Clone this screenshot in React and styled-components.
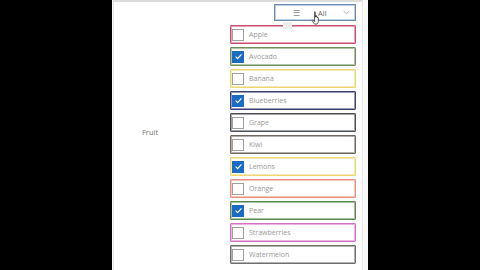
import React from "react";
import styled, { createGlobalStyle } from "styled-components";

const GlobalStyle = createGlobalStyle`
  html, body {
    margin: 0;
    padding: 0;
    background: #000;
    font-family: "Open Sans", "Liberation Sans", sans-serif;
  }
`;

const fruits = [
  { name: "Apple", color: "#c9506e", checked: false },
  { name: "Avocado", color: "#6f8f5c", checked: true },
  { name: "Banana", color: "#ecd774", checked: false },
  { name: "Blueberries", color: "#3d4272", checked: true },
  { name: "Grape", color: "#4f4f55", checked: false },
  { name: "Kiwi", color: "#6f6760", checked: false },
  { name: "Lemons", color: "#ecd774", checked: true },
  { name: "Orange", color: "#e8907e", checked: false },
  { name: "Pear", color: "#5b8a50", checked: true },
  { name: "Strawberries", color: "#d472c4", checked: false },
  { name: "Watermelon", color: "#6e6e6e", checked: false },
];

const Page = styled.div`
  width: 480px;
  height: 270px;
  display: flex;
  justify-content: center;
  overflow: hidden;
`;

const Panel = styled.div`
  width: 256px;
  height: 270px;
  background: #fafafa;
  padding: 0 5px 0 1px;
  box-sizing: border-box;
  display: flex;
`;

const Inner = styled.div`
  flex: 1;
  height: 270px;
  background: #fff;
  border-left: 1px solid #e6e6e6;
  border-right: 1px solid #e8e8e8;
  border-top: 2px solid #dcdcdc;
  box-sizing: border-box;
  display: flex;
  align-items: flex-start;
  padding: 2px 6px 0 28px;
`;

const Label = styled.div`
  width: 88px;
  margin-top: 123px;
  font-size: 7.5px;
  line-height: 10px;
  color: #777;
`;

const Column = styled.div`
  width: 126px;
  display: flex;
  flex-direction: column;
  align-items: flex-end;
`;

const FilterButton = styled.div`
  position: relative;
  width: 82px;
  height: 17px;
  box-sizing: border-box;
  border: 1px solid #6f8db0;
  box-shadow: inset 0 0 0 1px rgba(111, 141, 176, 0.45);
  display: flex;
  align-items: center;
  padding: 0 5px 0 18px;
  font-size: 7.5px;
  color: #666;
  margin-bottom: 4px;
`;

const Hamburger = styled.span`
  font-size: 8px;
  color: #888;
  width: 25px;
`;

const ButtonText = styled.span`
  flex: 1;
`;

const Cursor = styled.svg`
  position: absolute;
  left: 36px;
  top: 6px;
`;

const Ghost = styled.div`
  position: absolute;
  left: 8px;
  top: 17px;
  width: 9px;
  height: 7px;
  background: #ececec;
`;

const List = styled.div`
  width: 126px;
  display: flex;
  flex-direction: column;
  gap: 3px;
`;

const Item = styled.div`
  height: 19px;
  box-sizing: border-box;
  border: 1px solid ${(p) => p.$color};
  box-shadow: inset 0 0 0 1px ${(p) => p.$color}88;
  border-radius: 1px;
  display: flex;
  align-items: center;
  padding-left: 1px;
  font-size: 7px;
  color: #999;
`;

const Box = styled.span`
  width: 12px;
  height: 12px;
  box-sizing: border-box;
  border: 1px solid ${(p) => (p.$checked ? "#1b6ac4" : "#a0a0a0")};
  background: ${(p) => (p.$checked ? "#1b6ac4" : "#fff")};
  margin-right: 5px;
  display: flex;
  align-items: center;
  justify-content: center;
`;

const Check = () => (
  <svg width="9" height="9" viewBox="0 0 10 10">
    <path d="M1.8 5.2 L4 7.3 L8.3 2.6" fill="none" stroke="#fff" strokeWidth="1.3" />
  </svg>
);

const Chevron = () => (
  <svg width="7" height="5" viewBox="0 0 8 5">
    <path d="M0.7 0.8 L4 4 L7.3 0.8" fill="none" stroke="#999" strokeWidth="0.9" />
  </svg>
);

const Hand = () => (
  <Cursor width="12" height="14" viewBox="0 0 12 14">
    <path
      d="M3.5 1.2c0-.6.9-.6.9 0v5l.2-1.3c.1-.6.9-.6.9 0v1.2c.1-.6.9-.6.9 0v1c.1-.6.9-.6.9 0v3.2c0 1.2-.6 2.3-1.4 2.8H3.6c-.6-.6-1.6-2-2.3-3.2-.4-.6.3-1.1.8-.6l1.4 1.3V1.2z"
      fill="#fff"
      stroke="#222"
      strokeWidth="0.7"
      strokeLinejoin="round"
    />
  </Cursor>
);

export default function App() {
  return (
    <Page>
      <GlobalStyle />
      <Panel>
        <Inner>
          <Label>Fruit</Label>
          <Column>
            <FilterButton>
              <Hamburger>☰</Hamburger>
              <ButtonText>All</ButtonText>
              <Chevron />
              <Ghost />
              <Hand />
            </FilterButton>
            <List>
              {fruits.map((f) => (
                <Item key={f.name} $color={f.color}>
                  <Box $checked={f.checked}>{f.checked && <Check />}</Box>
                  {f.name}
                </Item>
              ))}
            </List>
          </Column>
        </Inner>
      </Panel>
    </Page>
  );
}
